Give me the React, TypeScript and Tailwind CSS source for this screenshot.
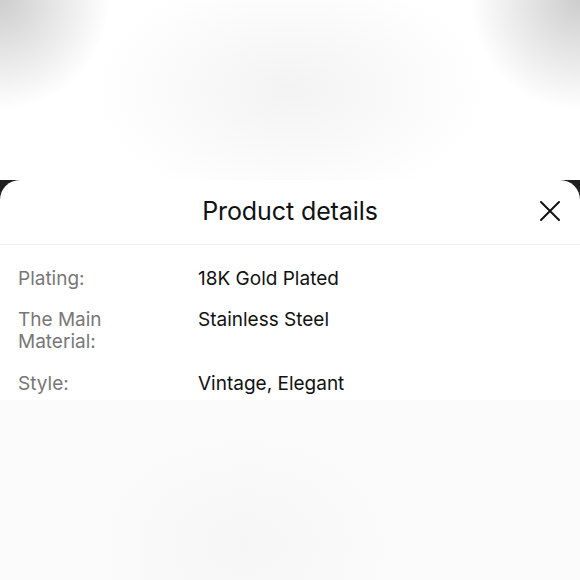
export default function App() {
  const rows: [string, string][] = [
    ["Plating:", "18K Gold Plated"],
    ["The Main Material:", "Stainless Steel"],
    ["Style:", "Vintage, Elegant"],
  ];
  return (
    <div
      className="w-[580px] h-[580px] overflow-hidden flex flex-col"
      style={{ fontFamily: "Inter, 'Noto Sans', sans-serif" }}
    >
      <div className="h-[180px] shrink-0 bg-white bg-[radial-gradient(ellipse_200px_120px_at_290px_90px,#f3f3f3,#ffffff_100%),radial-gradient(ellipse_110px_110px_at_0px_0px,#cdcdcd,transparent_100%),radial-gradient(ellipse_110px_110px_at_580px_0px,#cdcdcd,transparent_100%)] [background-blend-mode:multiply]" />
      <div className="shrink-0 bg-[linear-gradient(#1f1f1f_0px,#1f1f1f_22px,#ffffff_22px)]">
        <div className="bg-white rounded-t-[20px]">
          <div className="relative h-[65px] flex items-center justify-center border-b border-[#ececec]">
            <span className="text-[25px] leading-none text-[#111] tracking-[-0.1px] -mt-[2px]">
              Product details
            </span>
            <svg
              className="absolute right-[18px] top-[19px]"
              width="24"
              height="24"
              viewBox="0 0 24 24"
              fill="none"
              stroke="#111"
              strokeWidth="2"
              strokeLinecap="round"
            >
              <path d="M3 3L21 21M21 3L3 21" />
            </svg>
          </div>
          <div className="pt-[23px] pb-[5px] flex flex-col gap-[19px]">
            {rows.map(([k, v], i) => (
              <div
                key={k}
                className={`flex text-[19px] leading-[22px] ${i === 2 ? "mt-[1px]" : ""}`}
              >
                <div className="w-[198px] shrink-0 pl-[18px] pr-[70px] text-[#777]">{k}</div>
                <div className="text-[#111]">{v}</div>
              </div>
            ))}
          </div>
        </div>
      </div>
      <div className="flex-1 bg-[#fbfbfb] bg-[radial-gradient(ellipse_160px_120px_at_245px_145px,#f6f6f6,#fbfbfb_100%)]" />
    </div>
  );
}
